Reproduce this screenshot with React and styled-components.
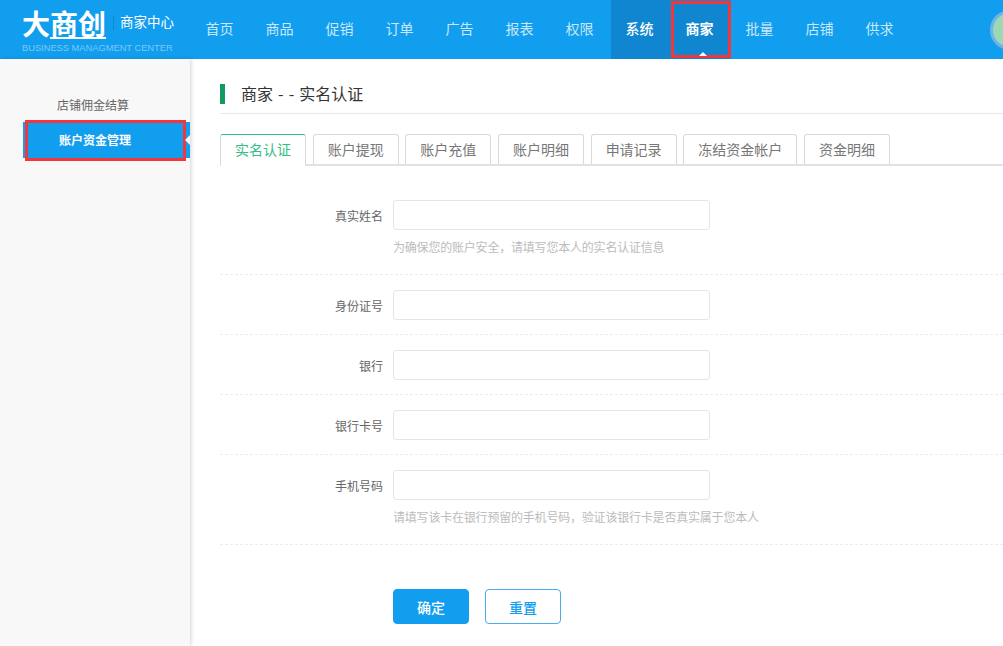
import styled, { createGlobalStyle } from 'styled-components';

const GlobalStyle = createGlobalStyle`
  html, body {
    margin: 0;
    padding: 0;
    background: #fff;
    overflow: hidden;
  }
  *, *::before, *::after {
    box-sizing: border-box;
  }
  body {
    font-family: "Noto Sans CJK SC", "Liberation Sans", sans-serif;
  }
`;

const Page = styled.div`
  width: 1003px;
  height: 646px;
  overflow: hidden;
  display: flex;
  flex-direction: column;
`;

const Header = styled.header`
  height: 59px;
  flex: none;
  display: flex;
  background: #129eee;
  position: relative;
`;

const Brand = styled.div`
  width: 191px;
  flex: none;
  padding: 5px 0 0 22px;
  color: #fff;
`;

const BrandTop = styled.div`
  display: flex;
  align-items: center;
  height: 36px;
`;

const BrandName = styled.span`
  font-size: 28px;
  line-height: 32px;
  font-weight: 700;
  width: 84px;
  height: 32px;
  white-space: nowrap;
  position: relative;

  &::after {
    content: '';
    position: absolute;
    left: 28px;
    right: 0;
    bottom: 0;
    height: 2px;
    background: #fff;
  }
`;

const BrandDivider = styled.span`
  width: 1px;
  height: 14px;
  margin: 0 6px 0 7px;
  background: #0f86cf;
`;

const BrandCenter = styled.span`
  font-size: 13.5px;
  white-space: nowrap;
  padding-bottom: 4px;
`;

const BrandSub = styled.div`
  font-family: "Liberation Sans", sans-serif;
  font-size: 9.3px;
  line-height: 12px;
  margin-top: 1px;
  color: #7cc8f4;
  white-space: nowrap;
`;

const Nav = styled.nav`
  display: flex;
`;

const NavItem = styled.a`
  width: 60px;
  height: 59px;
  padding: 0 3px 3px 0;
  display: flex;
  align-items: center;
  justify-content: center;
  font-size: 14px;
  position: relative;
  color: ${(p) => (p.$active || p.$current ? '#fff' : '#c9e8fb')};
  background: ${(p) => (p.$active || p.$current ? '#0f86cf' : 'transparent')};
  font-weight: ${(p) => (p.$current ? 700 : p.$active ? 500 : 400)};
`;

const NavMark = styled.span`
  position: absolute;
  inset: 1px 0 1px 0;
  border: 3px solid #f2373c;

  &::after {
    content: '';
    position: absolute;
    left: 25px;
    bottom: -1px;
    border: 4px solid transparent;
    border-top: 0;
    border-bottom-color: #fff;
  }
`;

const Avatar = styled.div`
  position: absolute;
  left: 990px;
  top: 10px;
  width: 40px;
  height: 40px;
  border-radius: 50%;
  background: #9bd8b4;
  border: 3px solid #6fb4e8;
`;

const Body = styled.div`
  flex: 1;
  display: flex;
  min-height: 0;
`;

const Sidebar = styled.aside`
  width: 190px;
  flex: none;
  padding-top: 35px;
  background: #f8f8f8;
  box-shadow: 1px 0 4px rgba(0, 0, 0, 0.18);
  position: relative;
`;

const SideLink = styled.div`
  height: 22px;
  margin-bottom: 6px;
  padding-left: 57px;
  font-size: 12px;
  line-height: 22px;
  color: #666;
`;

const SideActive = styled.div`
  margin-left: 23px;
  width: 167px;
  height: 36px;
  padding-left: 36px;
  font-size: 12px;
  font-weight: 700;
  line-height: 36px;
  color: #fff;
  background: #129eee;
  position: relative;

  &::before {
    content: '';
    position: absolute;
    left: 2px;
    top: -2px;
    width: 161px;
    height: 41px;
    border: 3px solid #f2373c;
  }

  &::after {
    content: '';
    position: absolute;
    right: 0;
    top: 13px;
    border: 5px solid transparent;
    border-left: 0;
    border-right-color: #f8f8f8;
  }
`;

const Main = styled.main`
  flex: 1;
  padding: 25px 0 0 30px;
  background: #fff;
  min-width: 0;
`;

const TitleBar = styled.div`
  height: 30px;
  display: flex;
  align-items: flex-start;
  border-bottom: 1px solid #e8e8e8;
`;

const TitleMark = styled.span`
  width: 5px;
  height: 20px;
  background: #12995f;
`;

const Title = styled.h1`
  margin: -1px 0 0 16px;
  font-size: 16px;
  font-weight: 400;
  line-height: 20px;
  word-spacing: 1.5px;
  color: #333;
  white-space: nowrap;
`;

const Tabs = styled.div`
  display: flex;
  gap: 6.67px;
  height: 32px;
  margin-top: 20px;
  border-bottom: 2px solid #e2e2e2;
`;

const Tab = styled.a`
  width: ${(p) => p.$width || 86}px;
  height: ${(p) => (p.$active ? 32 : 30)}px;
  display: flex;
  align-items: center;
  justify-content: center;
  padding-bottom: ${(p) => (p.$active ? 4 : 2)}px;
  font-size: 14px;
  color: ${(p) => (p.$active ? '#35bd85' : '#777')};
  background: #fff;
  border: 1px solid #d9d9d9;
  border-top-color: ${(p) => (p.$active ? '#35bd85' : '#d9d9d9')};
  border-bottom: 0;
  border-radius: 3px 3px 0 0;
`;

const Form = styled.form`
  padding-top: 19px;
`;

const Row = styled.div`
  padding: 15px 0 14px;
  border-bottom: 1px dashed #ececec;
`;

const Field = styled.div`
  display: flex;
  align-items: center;
  height: 30px;
`;

const Label = styled.label`
  width: 173px;
  flex: none;
  padding-right: 10px;
  text-align: right;
  font-size: 12px;
  color: #666;
`;

const Input = styled.input`
  width: 317px;
  height: 30px;
  padding: 0 8px;
  border: 1px solid #e6e6e6;
  border-radius: 3px;
  background: #fff;
  outline: none;
`;

const Hint = styled.p`
  margin: 8px 0 4px 173px;
  font-size: 12px;
  line-height: 18px;
  letter-spacing: -0.2px;
  color: #bcbcbc;
  white-space: nowrap;
`;

const Actions = styled.div`
  display: flex;
  gap: 16px;
  padding: 44px 0 0 173px;
`;

const Button = styled.button`
  width: 76px;
  height: 35px;
  padding: 0;
  font-family: inherit;
  font-size: 14px;
  font-weight: 500;
  border-radius: 4px;
  border: 1px solid ${(p) => (p.$primary ? '#129eee' : '#45aef0')};
  color: ${(p) => (p.$primary ? '#fff' : '#129eee')};
  background: ${(p) => (p.$primary ? '#129eee' : '#fff')};
`;

const navItems = ['首页', '商品', '促销', '订单', '广告', '报表', '权限', '系统', '商家', '批量', '店铺', '供求'];

const tabs = [
  { name: '实名认证', active: true },
  { name: '账户提现' },
  { name: '账户充值' },
  { name: '账户明细' },
  { name: '申请记录' },
  { name: '冻结资金帐户', width: 114 },
  { name: '资金明细' },
];

const fields = [
  { label: '真实姓名', hint: '为确保您的账户安全，请填写您本人的实名认证信息' },
  { label: '身份证号' },
  { label: '银行' },
  { label: '银行卡号' },
  { label: '手机号码', hint: '请填写该卡在银行预留的手机号码，验证该银行卡是否真实属于您本人' },
];

export default function App() {
  return (
    <Page>
      <GlobalStyle />
      <Header>
        <Brand>
          <BrandTop>
            <BrandName>大商创</BrandName>
            <BrandDivider />
            <BrandCenter>商家中心</BrandCenter>
          </BrandTop>
          <BrandSub>BUSINESS MANAGMENT CENTER</BrandSub>
        </Brand>
        <Nav>
          {navItems.map((item) => (
            <NavItem key={item} $active={item === '系统'} $current={item === '商家'}>
              {item}
              {item === '商家' && <NavMark />}
            </NavItem>
          ))}
        </Nav>
        <Avatar />
      </Header>
      <Body>
        <Sidebar>
          <SideLink>店铺佣金结算</SideLink>
          <SideActive>账户资金管理</SideActive>
        </Sidebar>
        <Main>
          <TitleBar>
            <TitleMark />
            <Title>商家 - - 实名认证</Title>
          </TitleBar>
          <Tabs>
            {tabs.map((tab) => (
              <Tab key={tab.name} $active={tab.active} $width={tab.width}>
                {tab.name}
              </Tab>
            ))}
          </Tabs>
          <Form>
            {fields.map((field) => (
              <Row key={field.label}>
                <Field>
                  <Label>{field.label}</Label>
                  <Input />
                </Field>
                {field.hint && <Hint>{field.hint}</Hint>}
              </Row>
            ))}
            <Actions>
              <Button type="button" $primary>确定</Button>
              <Button type="button">重置</Button>
            </Actions>
          </Form>
        </Main>
      </Body>
    </Page>
  );
}
